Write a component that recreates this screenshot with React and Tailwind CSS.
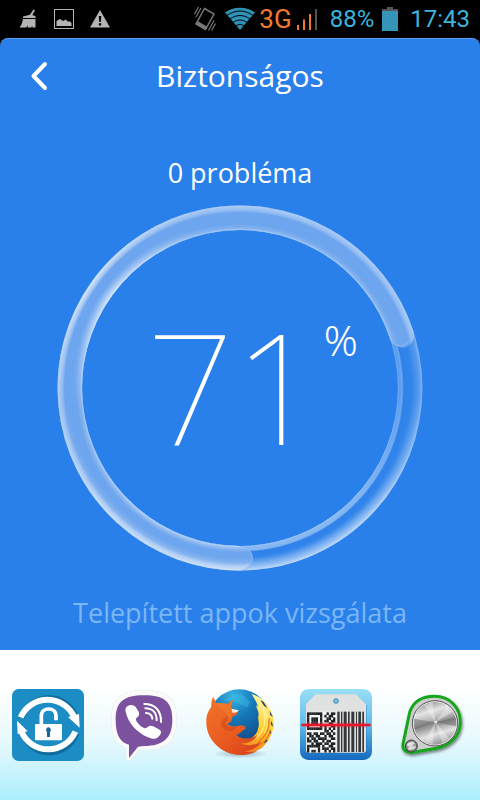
import React from 'react';

const QR_ROWS = [
  '1111111001011',
  '1000001010110',
  '1011101001101',
  '1011101011011',
  '1011101000110',
  '1000001010011',
  '1111111010101',
  '0000000011010',
  '1101101101101',
  '0110110010110',
  '1011011110011',
  '1101100101100',
  '0010111011011',
  '1111110100110',
  '1000010111011',
  '1011010010101',
];

const BARCODE = [
  [142, 7], [153, 4], [161, 9], [174, 5], [184, 9], [198, 3], [205, 8], [217, 5],
];

const BroomIcon = () => (
  <svg viewBox="0 0 20 20" className="w-5 h-5" fill="#b4b4b4" aria-hidden="true">
    <path d="M15.500 .5 17 1.300 14.300 6 17.500 7.200V9H5V7.500l7-1.700z" />
    <path d="M5 10h12.500v8.500h-3l-.5-2-.5 2H9.500l.3-2.500-1.600 2.500H1.500C3.500 16.500 4.500 13 5 10z" />
  </svg>
);

const PictureIcon = () => (
  <svg viewBox="0 0 20 20" className="w-5 h-5" aria-hidden="true">
    <rect x=".5" y=".5" width="19" height="19" fill="none" stroke="#b4b4b4" />
    <path d="M2.500 17V12l3.500-2 3 2 3-1.500 1.500 2H16l1.500 1.500v3z" fill="#b4b4b4" />
  </svg>
);

const WarningIcon = () => (
  <svg viewBox="0 0 20 20" className="w-5 h-5" aria-hidden="true">
    <path d="M10 1 20 18.500H0z" fill="#b4b4b4" />
    <path d="M8.800 7h2.500l-.5 6H9.300zM8.900 14.300h2.300v2.300H8.900z" fill="#000" />
  </svg>
);

const VibrateIcon = () => (
  <svg viewBox="0 0 24 26" className="w-6 h-[26px]" fill="none" stroke="#777" aria-hidden="true">
    <path d="M11.500 2.500 21 8 12.500 23.500 3 18z" strokeWidth="1.500" />
    <path d="m3 18 9.500 5.500L14 21 4.500 15.500z" fill="#777" />
    <path d="m5.500 1-4 7M8 2 3 11M21 14.500l-5.500 10M22.500 17.500l-4 7" strokeWidth="1.200" />
  </svg>
);

const WifiIcon = () => (
  <svg viewBox="0 0 30 24" className="w-[30px] h-6" aria-hidden="true">
    <path d="M15 23 0 5.500C8-1 22-1 30 5.500z" fill="#2f93b8" />
    <g fill="none" stroke="#000" strokeWidth="1">
      <path d="M2 8.500c8-6 18-6 26 0" />
      <path d="M5 12c6-4.600 14-4.600 20 0" />
      <path d="M8 15.500c4-3.200 10-3.200 14 0" />
      <path d="M11 19c2.500-2 5.500-2 8 0" />
    </g>
  </svg>
);

const SignalIcon = () => (
  <svg viewBox="0 0 22 22" className="w-[22px] h-[22px]" aria-hidden="true">
    <path d="M1 17h2v5H1zM7 11.500h2V22H7zM13 6h2v16h-2z" fill="#f07a2c" />
    <path d="M19 1h2v21h-2z" fill="#555" />
  </svg>
);

const BatteryIcon = () => (
  <svg viewBox="0 0 16 24" className="w-4 h-6" aria-hidden="true">
    <path d="M5 0h6v2h5v3H0V2h5z" fill="#555" />
    <path d="M0 4h16v20H0z" fill="#3594b8" />
  </svg>
);

const StatusBar = () => (
  <div className="h-[38px] px-[10px] flex items-center justify-between bg-black font-['Roboto',sans-serif] text-2xl leading-none">
    <div className="flex items-center gap-4 pl-2">
      <BroomIcon />
      <PictureIcon />
      <WarningIcon />
    </div>
    <div className="flex items-center text-[#3cb4dd]">
      <VibrateIcon />
      <span className="ml-2"><WifiIcon /></span>
      <span className="ml-1 text-[#f07a2c] text-[26px]">3G</span>
      <span className="ml-1"><SignalIcon /></span>
      <span className="ml-3">88%</span>
      <span className="ml-2"><BatteryIcon /></span>
      <span className="ml-3">17:43</span>
    </div>
  </div>
);

const ARC = 'M183 353.200A170.200 170.200 0 1 1 344.900 130.400';

const ProgressRing = () => (
  <svg viewBox="0 0 366 366" className="w-full" aria-hidden="true">
    <defs>
      <radialGradient id="track" gradientUnits="userSpaceOnUse" cx="183" cy="183" r="182.500">
        <stop offset=".864" stopColor="#fff" stopOpacity=".42" />
        <stop offset=".872" stopColor="#fff" stopOpacity=".22" />
        <stop offset=".89" stopColor="#fff" stopOpacity=".3" />
        <stop offset=".897" stopColor="#fff" stopOpacity=".02" />
        <stop offset=".94" stopColor="#fff" stopOpacity=".04" />
        <stop offset=".982" stopColor="#fff" stopOpacity=".22" />
        <stop offset="1" stopColor="#fff" stopOpacity=".42" />
      </radialGradient>
      <radialGradient id="trackGlow" gradientUnits="userSpaceOnUse" cx="183" cy="183" r="182.500">
        <stop offset=".864" stopColor="#fff" stopOpacity=".35" />
        <stop offset=".895" stopColor="#fff" stopOpacity=".15" />
        <stop offset=".9" stopColor="#fff" stopOpacity="0" />
        <stop offset=".925" stopColor="#fff" stopOpacity="0" />
        <stop offset="1" stopColor="#fff" stopOpacity=".5" />
      </radialGradient>
      <radialGradient id="tube" gradientUnits="userSpaceOnUse" cx="183" cy="183" r="182.500">
        <stop offset=".864" stopColor="#fff" stopOpacity=".5" />
        <stop offset=".875" stopColor="#fff" stopOpacity=".15" />
        <stop offset=".9" stopColor="#fff" stopOpacity="0" />
        <stop offset=".96" stopColor="#fff" stopOpacity="0" />
        <stop offset=".975" stopColor="#fff" stopOpacity=".25" />
        <stop offset="1" stopColor="#fff" stopOpacity=".45" />
      </radialGradient>
      <radialGradient id="lowerGlow" gradientUnits="userSpaceOnUse" cx="183" cy="183" r="182.500">
        <stop offset=".864" stopColor="#fff" stopOpacity=".25" />
        <stop offset=".9" stopColor="#fff" stopOpacity="0" />
        <stop offset=".93" stopColor="#fff" stopOpacity="0" />
        <stop offset="1" stopColor="#fff" stopOpacity=".4" />
      </radialGradient>
      <radialGradient id="diagonalGlow" gradientUnits="userSpaceOnUse" cx="183" cy="183" r="182.500">
        <stop offset=".864" stopColor="#fff" stopOpacity=".65" />
        <stop offset=".92" stopColor="#fff" stopOpacity="0" />
        <stop offset=".96" stopColor="#fff" stopOpacity="0" />
        <stop offset="1" stopColor="#fff" stopOpacity=".6" />
      </radialGradient>
      <linearGradient id="downFade" x1="0" y1="0" x2="0" y2="1">
        <stop offset=".52" stopColor="#000" />
        <stop offset=".85" stopColor="#fff" />
      </linearGradient>
      <radialGradient id="spot" gradientUnits="userSpaceOnUse" cx="45" cy="88" r="120">
        <stop offset="0" stopColor="#fff" />
        <stop offset="1" stopColor="#000" />
      </radialGradient>
      <mask id="lower"><rect width="366" height="366" fill="url(#downFade)" /></mask>
      <mask id="upperLeft"><rect width="366" height="366" fill="url(#spot)" /></mask>
      <mask id="rest">
        <rect width="366" height="366" fill="#fff" />
        <path d={ARC} fill="none" stroke="#000" strokeWidth="24.500" strokeLinecap="round" />
      </mask>
    </defs>
    <g fill="none" strokeWidth="24.500">
      <g mask="url(#rest)">
        <circle cx="183" cy="183" r="170.200" stroke="url(#track)" />
        <circle cx="183" cy="183" r="170.200" stroke="url(#trackGlow)" mask="url(#lower)" />
      </g>
      <g strokeLinecap="round">
        <path d={ARC} stroke="#6da5ee" />
        <path d={ARC} stroke="url(#tube)" />
        <path d={ARC} stroke="url(#lowerGlow)" mask="url(#lower)" />
        <path d={ARC} stroke="url(#diagonalGlow)" mask="url(#upperLeft)" />
      </g>
      <path d="M333 133.500C337 143 352 145 356.500 127M183 341.500C199 342 200 364 183 365.500" stroke="#8fbbf4" strokeWidth="1" />
    </g>
  </svg>
);

const LockIcon = () => (
  <svg viewBox="36 27 216 216" className="w-[72px] h-[72px] overflow-visible" aria-hidden="true">
    <rect x="36" y="27" width="216" height="216" rx="20" fill="#1c8cc4" />
    <g fill="none" stroke="#0f6c9e" strokeWidth="17" transform="translate(3 4)">
      <path d="M62 110A86 86 0 0 1 222 100M68 165A86 86 0 0 0 226 157" />
    </g>
    <g fill="none" stroke="#fff" strokeWidth="18">
      <path d="M62 112A88 88 0 0 1 224 114" />
      <path d="M64 154A88 88 0 0 0 226 155" />
    </g>
    <path d="M204 111 239 143 237 102zM51 122 83 154 53 162z" fill="#fff" />
    <path d="M124 134v-26c0-28 44-28 44 0v13" fill="none" stroke="#fff" strokeWidth="11" />
    <rect x="105" y="132" width="81" height="49" rx="3" fill="#fff" />
    <path d="M145 142a8 8 0 0 1 5 14v15h-9v-15a8 8 0 0 1 4-14z" fill="#17699a" />
  </svg>
);

const ViberIcon = () => (
  <svg viewBox="24 27 216 216" className="w-[72px] h-[72px] overflow-visible" aria-hidden="true">
    <path
      d="M132 39c62 0 90 18 90 79s-25 82-84 83l-24 1-27 31V198c-30-9-45-30-45-78 0-62 28-81 90-81z"
      fill="#fafafa" stroke="#e4eced" strokeWidth="19" strokeLinejoin="round"
    />
    <path
      d="M132 39c62 0 90 18 90 79s-25 82-84 83l-24 1-27 31V198c-30-9-45-30-45-78 0-62 28-81 90-81z"
      fill="#fafafa" stroke="#fafafa" strokeWidth="16" strokeLinejoin="round"
    />
    <path d="M132 46c61 0 85 19 85 73 0 56-27 78-85 79l-18 2-27 34v-40c-27-8-40-29-40-75 0-53 24-73 85-73z" fill="#7c519d" />
    <path d="M82 79c8-6 18-5 25 2l9 14c4 10-2 16-8 20-3 7 11 24 25 30 8 1 11-8 19-8 8 0 25 10 30 15 4 7-4 17-12 22-8 5-17 2-26-2-37-17-59-43-67-77-2-7 0-12 5-16z" fill="#fff" />
    <g fill="none" stroke="#fff" strokeWidth="6" strokeLinecap="round">
      <path d="M138 99q17 0 19 17" />
      <path d="M136 85c23 0 34 15 34 36" />
      <path d="M133 72c34 0 51 22 50 54" />
    </g>
  </svg>
);

const FirefoxIcon = () => (
  <svg viewBox="27 27 216 216" className="w-[72px] h-[72px] overflow-visible" aria-hidden="true">
    <defs>
      <radialGradient id="globe" cx=".4" cy=".1" r=".9">
        <stop offset="0" stopColor="#38b3e2" />
        <stop offset=".4" stopColor="#1478b8" />
        <stop offset="1" stopColor="#123d7c" />
      </radialGradient>
      <linearGradient id="fur" x1="0" y1="0" x2=".8" y2="1">
        <stop offset="0" stopColor="#f0752a" />
        <stop offset=".6" stopColor="#ea5c20" />
        <stop offset="1" stopColor="#d8431d" />
      </linearGradient>
      <linearGradient id="tail" x1=".6" y1="0" x2=".3" y2="1">
        <stop offset="0" stopColor="#fff3a0" />
        <stop offset=".45" stopColor="#ffd32c" />
        <stop offset=".75" stopColor="#f69b22" />
        <stop offset="1" stopColor="#e5581e" />
      </linearGradient>
      <radialGradient id="foxShadow">
        <stop offset="0" stopColor="#234" stopOpacity=".35" />
        <stop offset="1" stopColor="#234" stopOpacity="0" />
      </radialGradient>
    </defs>
    <ellipse cx="137" cy="221" rx="82" ry="14" fill="url(#foxShadow)" />
    <circle cx="133" cy="121" r="93" fill="url(#globe)" />
    <path d="M81 59c20 0 27-18 51-16 19 1 18 14 34 22l-9 17-29-12-20-8z" fill="#46c6ed" opacity=".35" />
    <path
      d="M170 42C206 52 232 84 236 121L237 140 229 163 220 182 202 203 178 216C140 232 86 224 60 190L130 182C166 184 186 166 190 143 194 128 188 118 190 108 194 98 184 84 183 76L189 80C185 64 176 54 170 42z"
      fill="url(#tail)"
    />
    <path d="M196 60 206 66 217 84 207 77zM224 92 234 112 225 104zM230 122 234 140 227 133zM225 148 229 158 221 166zM214 176 217 183 206 191z" fill="#2b3c64" />
    <path d="M192 66C206 84 211 104 209 128 206 152 190 172 168 181M203 80C220 104 222 140 210 158" fill="none" stroke="#fff0a0" strokeWidth="4" strokeLinecap="round" opacity=".8" />
    <path d="M222 116C224 144 212 170 190 186M226 152C220 174 206 190 186 199" fill="none" stroke="#ee7a20" strokeWidth="4" strokeLinecap="round" />
    <path d="M54 51c4 5 7 12 9 18 14 0 25 0 36 3 5-7 9-10 16-13-5 10-8 18-6 27l18 8c3 8-4 12-14 15l-4 15-12 8c8 7 18 8 31 6 12-5 22-1 25 7-11 5-14 15-29 20 14 13 39 15 63 1-7 15-28 25-48 24 20 11 45 5 60-6-11 20-33 28-52 30 18 6 29 1 38-1-22 14-57 15-84 5-37-13-66-47-67-88-1-22 4-35 15-49-1-11 1-22 5-30z" fill="url(#fur)" />
    <path d="M63 69c14 0 25 0 36 3 4-7 9-10 16-13-7 10-9 24-1 35-6 6-5 19-8 27-5-17-20-24-43-52z" fill="#f08330" opacity=".5" />
    <path d="M109 86 131 91c-1 5-9 8-18 8z" fill="#faead0" />
    <path d="M97 108c4 8-1 16-8 20 9 17 29 15 40 10-8 14-27 20-41 10-16-11-11-29 9-40z" fill="#c83f16" opacity=".45" />
  </svg>
);

const ScannerIcon = () => (
  <svg viewBox="30 27 216 216" className="w-[72px] h-[72px] overflow-visible" aria-hidden="true">
    <defs>
      <linearGradient id="scanBg" x1="0" y1="0" x2="0" y2="1">
        <stop offset="0" stopColor="#9adff5" />
        <stop offset=".5" stopColor="#62bced" />
        <stop offset="1" stopColor="#1469bd" />
      </linearGradient>
    </defs>
    <rect x="30" y="27" width="216" height="213" rx="25" fill="url(#scanBg)" />
    <path d="M79 46H200L230 76V212q0 8-8 8H56q-8 0-8-8V74z" fill="#246baa" opacity=".5" />
    <path d="M77 43H198L228 73V210q0 8-8 8H56q-8 0-8-8V72z" fill="#e0e1e1" />
    <path d="M51 95h88v122H51z" fill="#f6f6f6" />
    <circle cx="138" cy="63" r="7" fill="#73c8ec" stroke="#4481a5" strokeWidth="3" />
    <g fill="#202526">
      {QR_ROWS.map((row, y) => [...row].map((cell, x) => (
        cell === '1' && <rect key={`${x}-${y}`} x={51 + x * 6.5} y={97 + y * 7.5} width="7" height="8" />
      )))}
    </g>
    {BARCODE.map(([x, width]) => (
      <rect key={x} x={x} y="95" width={width} height="121" fill="#34383a" />
    ))}
    <path d="M34 131h208v8H34z" fill="#e51b2c" />
    <path d="M48 127h181v16H48z" fill="#ee1630" opacity=".25" />
  </svg>
);

const KnobIcon = () => (
  <svg viewBox="18 27 216 216" className="w-[72px] h-[72px] overflow-visible" aria-hidden="true">
    <defs>
      <linearGradient id="metal" x1=".2" y1="0" x2=".5" y2="1">
        <stop offset="0" stopColor="#8a8a8a" />
        <stop offset=".25" stopColor="#e4e4e4" />
        <stop offset=".45" stopColor="#b5b5b5" />
        <stop offset=".54" stopColor="#8a8a8a" />
        <stop offset=".78" stopColor="#e2e2e2" />
        <stop offset="1" stopColor="#999" />
      </linearGradient>
      <filter id="knobShadow" x="-20%" y="-20%" width="150%" height="150%">
        <feDropShadow dx="3" dy="6" stdDeviation="5" floodOpacity=".5" />
      </filter>
    </defs>
    <path
      d="M59 97C70 64 98 49 134 49c46 0 77 35 77 76 0 43-30 69-68 79l-74 13c-20 3-33-8-30-24z"
      fill="#cfcfcf" stroke="#18a51d" strokeWidth="9" filter="url(#knobShadow)"
    />
    <circle cx="135" cy="130" r="68" fill="#e9e9e9" stroke="#555" strokeWidth="3" />
    <circle cx="135" cy="130" r="64" fill="url(#metal)" />
    <path d="m136 127-64-11 2 32zM136 127l62-14 1 26z" fill="#555" opacity=".4" />
    <path d="m136 127-34-52 26-9zM136 127l36-49 15 17zM136 127l-32 57 24 9zM136 127l43 49-22 13z" fill="#fff" opacity=".35" />
    <circle cx="137" cy="126" r="4" fill="#f4f4f4" />
    <circle cx="64" cy="198" r="18" fill="#777" stroke="#444" strokeWidth="3" />
    <circle cx="64" cy="198" r="14" fill="url(#metal)" />
    <path d="m52 191 14-3 5 13-13 5z" fill="#eee" opacity=".7" />
  </svg>
);

const APPS = [
  { id: 'lock', icon: LockIcon },
  { id: 'viber', icon: ViberIcon },
  { id: 'firefox', icon: FirefoxIcon },
  { id: 'scanner', icon: ScannerIcon },
  { id: 'knob', icon: KnobIcon },
];

const App = () => (
  <div className="min-h-screen flex flex-col bg-black font-['Open_Sans','Noto_Sans',sans-serif]">
    <StatusBar />

    <main className="flex-1 flex flex-col items-center rounded-t-lg border-t border-[#5a9df2] bg-[#2a80ea] text-white">
      <header className="w-full grid grid-cols-[80px_1fr_80px] items-center h-[74px]">
        <button type="button" aria-label="Vissza" className="h-full flex items-center justify-center">
          <svg viewBox="0 0 20 32" className="w-5 h-8" fill="none" stroke="#fff" strokeWidth="4" strokeLinecap="round" strokeLinejoin="round">
            <path d="M15 4 3.500 16 15 28" />
          </svg>
        </button>
        <h1 className="text-center text-[30px] leading-10">Biztonságos</h1>
      </header>

      <p className="mt-10 text-[27px] leading-10">0 probléma</p>

      <div className="mt-3 w-full max-w-[366px] grid">
        <div className="col-start-1 row-start-1"><ProgressRing /></div>
        <div className="col-start-1 row-start-1 flex items-start justify-center pt-[105px] pl-6 font-['Noto_Sans',sans-serif]">
          <span className="text-[154px] leading-[150px] font-thin">71</span>
          <span className="text-[42px] leading-[60px] font-light ml-0.5">%</span>
        </div>
      </div>

      <p className="mt-[22px] pb-3 text-[27px] leading-10 text-[#7bb6f6]">Telepített appok vizsgálata</p>
    </main>

    <nav className="h-[150px] pt-[39px] grid grid-cols-5 items-start justify-items-center bg-linear-to-b from-white from-25% via-[#e8f9fd] via-60% to-[#abeefc]">
      {APPS.map((app) => {
        const Icon = app.icon;
        return (
          <button key={app.id} type="button" aria-label={app.id}>
            <Icon />
          </button>
        );
      })}
    </nav>
  </div>
);

export default App;
